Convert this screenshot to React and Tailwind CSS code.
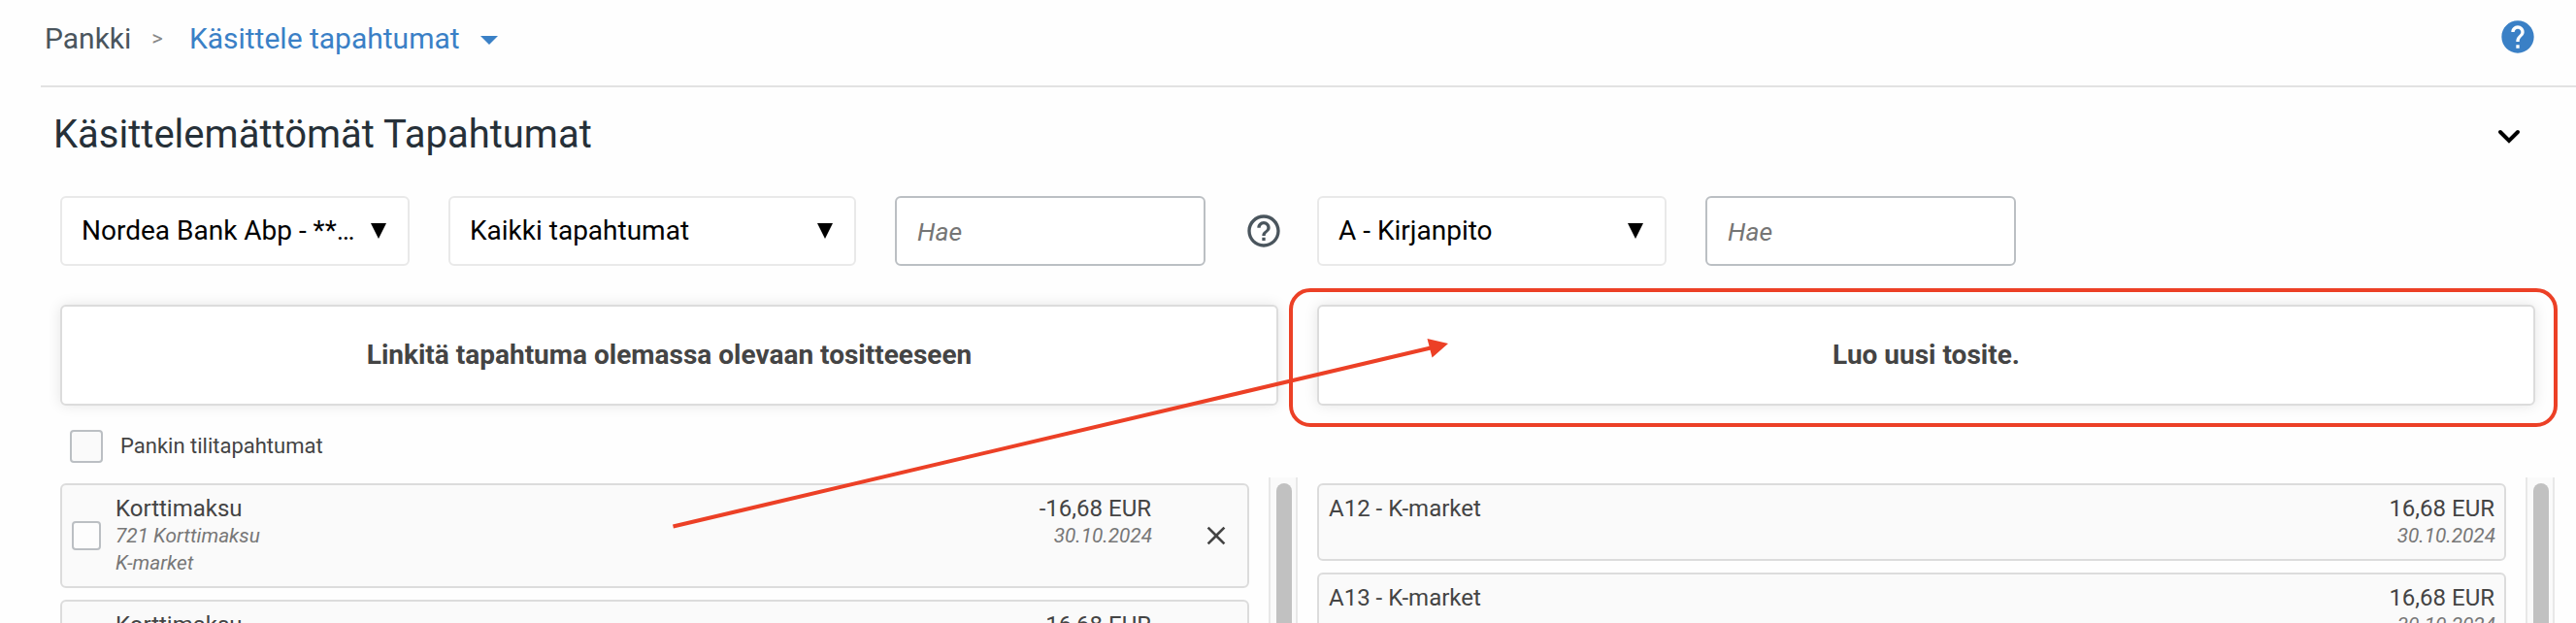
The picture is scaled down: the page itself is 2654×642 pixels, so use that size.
import React from 'react';
import { MdHelp, MdHelpOutline, MdClose } from 'react-icons/md';

const transactions = [
  { id: 1, title: 'Korttimaksu', type: '721 Korttimaksu', payee: 'K-market', amount: '-16,68 EUR', date: '30.10.2024' },
  { id: 2, title: 'Korttimaksu', type: '721 Korttimaksu', payee: 'K-market', amount: '-16,68 EUR', date: '30.10.2024' },
];

const receipts = [
  { id: 1, title: 'A12 - K-market', amount: '16,68 EUR', date: '30.10.2024' },
  { id: 2, title: 'A13 - K-market', amount: '16,68 EUR', date: '30.10.2024' },
];

function Select({ label, className }) {
  return (
    <button
      type="button"
      className={`flex h-[72px] shrink-0 items-center justify-between rounded-md border-2 border-[#e9e9e9] bg-white pl-[20px] pr-[22px] text-[28px] leading-[32px] text-black ${className}`}
    >
      <span className="whitespace-nowrap">{label}</span>
      <svg width="16" height="16" viewBox="0 0 16 16" className="shrink-0">
        <path d="M0 0h16L8 16z" fill="currentColor" />
      </svg>
    </button>
  );
}

function SearchInput() {
  return (
    <input
      type="text"
      placeholder="Hae"
      className="h-[72px] w-[320px] shrink-0 rounded-md border-2 border-[#bbbfc3] bg-white pl-[21px] text-[26.6px] italic placeholder-[#757575] focus:outline-none"
    />
  );
}

function ActionButton({ children }) {
  return (
    <button
      type="button"
      className="h-[104px] w-[1255px] rounded-md border-2 border-[#dcdcdc] bg-white text-[28px] font-bold text-[#444] shadow-[0_0_14px_rgba(0,0,0,0.1)]"
    >
      {children}
    </button>
  );
}

function Scrollbar() {
  return (
    <div className="h-[150px] w-[30px] shrink-0 border-x-2 border-[#e8e8e8] bg-[#fafafa] pt-[6px] pl-[6px]">
      <div className="h-[400px] w-[16px] rounded-full bg-[#c1c1c1]"></div>
    </div>
  );
}

function TransactionCard({ item }) {
  return (
    <div className="flex h-[108px] shrink-0 rounded-md border-2 border-[#dcdcdc] bg-[#fafafa] pl-[10px] pr-[16px]">
      <div className="flex w-[45px] items-center">
        <div className="size-[30px] rounded-[4px] border-2 border-[#bbbfc3] bg-[#fdfdfd]"></div>
      </div>
      <div className="flex-1 pt-[9px]">
        <p className="text-[24px] leading-[30px] text-[#444]">{item.title}</p>
        <p className="-mt-px text-[20.8px] leading-[28px] text-[#777] italic">{item.type}</p>
        <p className="text-[20.8px] leading-[28px] text-[#777] italic">{item.payee}</p>
      </div>
      <div className="pt-[9px] pr-[51px] text-right">
        <p className="text-[24px] leading-[30px] text-[#444]">{item.amount}</p>
        <p className="-mt-px -mr-px text-[20.8px] leading-[28px] text-[#777] italic">{item.date}</p>
      </div>
      <div className="flex items-center">
        <MdClose size={32} className="text-[#444]" />
      </div>
    </div>
  );
}

function ReceiptCard({ item }) {
  return (
    <div className="flex h-[80px] shrink-0 justify-between rounded-md border-2 border-[#dcdcdc] bg-[#fafafa] px-[10px] pt-[9px]">
      <p className="text-[24px] leading-[30px] text-[#444]">{item.title}</p>
      <div className="text-right">
        <p className="text-[24px] leading-[30px] text-[#444]">{item.amount}</p>
        <p className="-mt-px -mr-px text-[20.8px] leading-[28px] text-[#777] italic">{item.date}</p>
      </div>
    </div>
  );
}

// Red frame and arrow pointing at the "create new" button
function Annotation() {
  return (
    <svg className="pointer-events-none absolute inset-0" width="2654" height="642" viewBox="0 0 2654 642" fill="none">
      <rect x="1330" y="299" width="1303" height="139" rx="20" stroke="#ec4026" strokeWidth="4" />
      <path d="M693.5 542.5L1474 358.5" stroke="#ec4026" strokeWidth="4" />
      <path d="M1492 354L1470.5 349L1475.5 368.5z" fill="#ec4026" />
    </svg>
  );
}

function App() {
  return (
    <div className="relative h-[642px] w-[2654px] overflow-hidden bg-[#fefefe] font-['Roboto',sans-serif]">
      <header className="ml-[42px] flex h-[90px] items-center border-b-2 border-[#e2e2e2] pr-[40px] pb-[10px] pl-[4px] text-[30px]">
        <span className="text-[#4a555d]">Pankki</span>
        <span className="ml-[21px] text-[22px] text-[#888]">&gt;</span>
        <span className="ml-[27px] text-[#3a80c6]">Käsittele tapahtumat</span>
        <svg width="18" height="9" viewBox="0 0 18 9" className="mt-[5px] ml-[21px]">
          <path d="M0 0h18L9 9z" fill="#3a80c6" />
        </svg>
        <MdHelp size={40} className="mb-[2px] ml-auto text-[#3a80c6]" />
      </header>

      <div className="flex h-[112px] items-center justify-between pr-[56px] pl-[55px]">
        <h1 className="pb-[14px] text-[40px] text-[#263038]">Käsittelemättömät Tapahtumat</h1>
        <svg width="26" height="18" viewBox="0 0 26 18" className="mb-[11px]" fill="none">
          <path d="M4 4l9 9 9-9" stroke="black" strokeWidth="4" strokeLinecap="round" />
        </svg>
      </div>

      <div className="flex items-center pl-[62px]">
        <Select label="Nordea Bank Abp - **…" className="w-[360px]" />
        <Select label="Kaikki tapahtumat" className="ml-[40px] w-[420px]" />
        <div className="ml-[40px] flex">
          <SearchInput />
        </div>
        <MdHelpOutline size={40} className="ml-[40px] shrink-0 text-[#4a555d]" />
        <Select label="A - Kirjanpito" className="ml-[35px] w-[360px]" />
        <div className="ml-[40px] flex">
          <SearchInput />
        </div>
      </div>

      <div className="mt-[40px] flex gap-[40px] pl-[62px]">
        <ActionButton>Linkitä tapahtuma olemassa olevaan tositteeseen</ActionButton>
        <ActionButton>Luo uusi tosite.</ActionButton>
      </div>

      <div className="flex h-[74px] items-center pt-[10px] pl-[72px]">
        <div className="size-[34px] rounded-[4px] border-2 border-[#bbbfc3] bg-[#fafafa]"></div>
        <span className="mb-[1px] ml-[18px] text-[22px] text-[#444]">Pankin tilitapahtumat</span>
      </div>

      <div className="flex h-[150px] overflow-hidden pl-[62px]">
        <div className="flex w-[1225px] flex-col gap-[12px] pt-[6px]">
          {transactions.map((item) => (
            <TransactionCard key={item.id} item={item} />
          ))}
        </div>
        <div className="ml-[20px] overflow-hidden">
          <Scrollbar />
        </div>
        <div className="ml-[20px] flex w-[1225px] flex-col gap-[12px] pt-[6px]">
          {receipts.map((item) => (
            <ReceiptCard key={item.id} item={item} />
          ))}
        </div>
        <div className="ml-[20px] overflow-hidden">
          <Scrollbar />
        </div>
      </div>

      <Annotation />
    </div>
  );
}

export default App;
